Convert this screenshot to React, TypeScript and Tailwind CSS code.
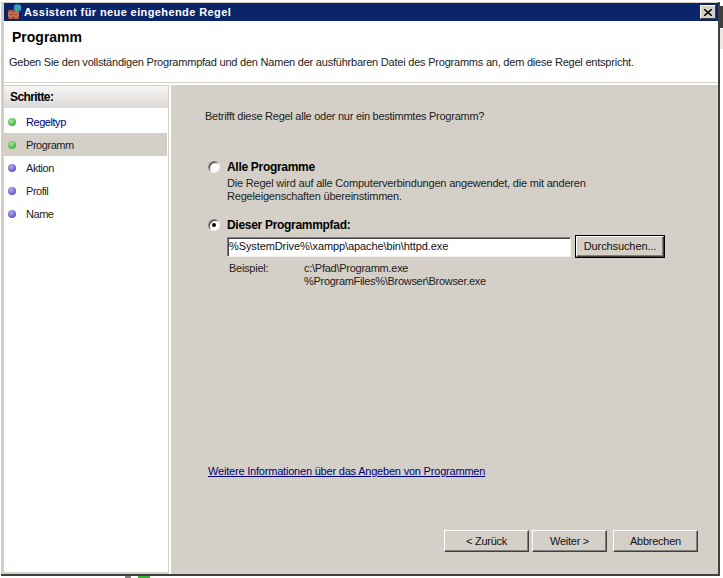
const font = { fontFamily: '"Liberation Sans", Arial, sans-serif' };

const raised = "bg-[#d4d0c8] border border-t-white border-l-white border-r-[#404040] border-b-[#404040] shadow-[inset_-1px_-1px_0_#808080]";

function Dot({ green }: { green?: boolean }) {
  return (
    <span
      className={
        "block w-[8px] h-[8px] rounded-full shrink-0 " +
        (green
          ? "bg-[radial-gradient(circle_at_40%_35%,#a8e8a0,#3fae3a_75%)]"
          : "bg-[radial-gradient(circle_at_40%_35%,#b4b0ee,#5a52c0_75%)]")
      }
    />
  );
}

function Step({ label, green, active, link }: { label: string; green?: boolean; active?: boolean; link?: boolean }) {
  return (
    <div className={"h-[23px] flex items-center pl-[4px] gap-[10px] w-[163px] " + (active ? "bg-[#d4d0c8]" : "")}>
      <Dot green={green} />
      <span className={"pt-[2px] text-[11px] tracking-[-0.45px] " + (link ? "text-[#000080]" : "text-[#1c1c1c]")}>{label}</span>
    </div>
  );
}

function Radio({ checked }: { checked?: boolean }) {
  return (
    <span className="w-[12px] h-[12px] rounded-full bg-white shrink-0 border border-t-[#808080] border-l-[#808080] border-r-[#f4f2ee] border-b-[#f4f2ee] shadow-[inset_1px_1px_0_#404040] flex items-center justify-center">
      {checked && <span className="w-[4px] h-[4px] rounded-full bg-black block" />}
    </span>
  );
}

function Btn({ label, w }: { label: string; w: string }) {
  return (
    <div className={raised + " h-[22px] flex items-center justify-center text-[11px] tracking-[-0.25px] text-[#111] " + w}>{label}</div>
  );
}

export default function App() {
  return (
    <div className="w-[723px] h-[578px] bg-white overflow-hidden flex" style={font}>
      <div className="w-[720px] shrink-0 flex flex-col pt-[2px]">
        <div className="ml-[1px] w-[719px] h-[574px] shrink-0 bg-[#d4d0c8] border-r-2 border-r-[#404040] border-b-2 border-b-[#404040] pl-[3px] pt-[1px] flex flex-col">
          {/* Title bar */}
          <div className="h-[18px] bg-[#0a246a] flex items-center pl-[3px] pr-[2px] shrink-0">
            <svg width="16" height="16" viewBox="0 0 16 16" className="shrink-0">
              <rect x="1" y="6" width="11" height="9" fill="#a5472f" />
              <path d="M1 9h11M1 12h11M4 6v3M9 6v3M2 9v3M7 9v3M11 9v3M4 12v3M9 12v3" stroke="#d9a58c" strokeWidth="0.7" />
              <circle cx="10.500" cy="4" r="3.800" fill="#2f8fe0" />
              <path d="M8 2c1.500-.8 3 .2 2.500 1.500S9 5 9.500 7M12 1.500c.8.800 1.500 1.500 1 2.800" stroke="#4fc050" strokeWidth="1.300" fill="none" />
            </svg>
            <span className="ml-[1px] text-white font-bold text-[11px] tracking-[0.4px] whitespace-nowrap">Assistent für neue eingehende Regel</span>
            <div className="ml-auto w-[16px] h-[14px] bg-[#d4d0c8] border border-t-white border-l-white border-r-[#404040] border-b-[#404040] flex items-center justify-center">
              <svg width="8" height="7" viewBox="0 0 8 7">
                <path d="M0 0l8 7M8 0l-8 7" stroke="#000" strokeWidth="1.400" />
              </svg>
            </div>
          </div>

          {/* Header */}
          <div className="h-[61px] bg-white shrink-0 pl-[5px] pt-[8px]">
            <div className="pl-[3px] text-[14px] font-bold text-black leading-[16px]">Programm</div>
            <div className="mt-[10px] text-[11px] text-[#1c1c1c] tracking-[-0.22px] leading-[15px] whitespace-nowrap">
              Geben Sie den vollständigen Programmpfad und den Namen der ausführbaren Datei des Programms an, dem diese Regel entspricht.
            </div>
          </div>
          <div className="h-[1px] bg-[#d4d0c8] shrink-0" />
          <div className="h-[2px] bg-white shrink-0" />

          {/* Main */}
          <div className="flex-1 flex min-h-0">
            <div className="w-[164px] bg-white shrink-0 border-t border-t-[#d4d0c8] border-b-2 border-b-[#d4d0c8] flex flex-col">
              <div className="h-[22px] bg-[linear-gradient(#f8f5f5,#dcd8d8)] flex items-center pl-[6px] text-[12px] font-bold tracking-[-0.6px] text-black">Schritte:</div>
              <div className="pt-[2px]">
                <Step label="Regeltyp" green link />
                <Step label="Programm" green active />
                <Step label="Aktion" />
                <Step label="Profil" />
                <Step label="Name" />
              </div>
            </div>

            <div className="w-[1px] shrink-0 bg-[#d4d0c8]" />
            <div className="w-[2px] shrink-0 bg-white" />

            <div className="flex-1 min-w-0 flex flex-col pl-[34px] pt-[24px] pb-[22px] text-[11px] text-[#1c1c1c] tracking-[-0.26px]">
              <div className="leading-[15px]">Betrifft diese Regel alle oder nur ein bestimmtes Programm?</div>

              <div className="mt-[35px] flex items-center gap-[7px] h-[15px] ml-[3px]">
                <Radio />
                <span className="font-bold text-[12px] tracking-[-0.3px] text-black">Alle Programme</span>
              </div>
              <div className="ml-[22px] mt-[3px] leading-[13px] w-[400px] tracking-[-0.2px]">
                Die Regel wird auf alle Computerverbindungen angewendet, die mit anderen Regeleigenschaften übereinstimmen.
              </div>

              <div className="mt-[14px] flex items-center gap-[7px] h-[15px] ml-[3px]">
                <Radio checked />
                <span className="font-bold text-[12px] tracking-[-0.3px] text-black">Dieser Programmpfad:</span>
              </div>
              <div className="ml-[22px] mt-[4px] flex items-center gap-[5px]">
                <div className="w-[344px] h-[20px] bg-white border border-t-[#808080] border-l-[#808080] border-r-[#f4f2ee] border-b-[#f4f2ee] shadow-[inset_1px_1px_0_#404040] flex items-center pl-[1px] text-[#111] tracking-[-0.1px]">
                  %SystemDrive%\xampp\apache\bin\httpd.exe
                </div>
                <div className={raised + " outline outline-1 outline-black w-[88px] h-[21px] flex items-center justify-center tracking-[-0.1px] text-[#111]"}>Durchsuchen...</div>
              </div>
              <div className="ml-[24px] mt-[5px] flex leading-[13px]">
                <div className="w-[75px]">Beispiel:</div>
                <div>
                  <div>c:\Pfad\Programm.exe</div>
                  <div className="tracking-[-0.3px]">%ProgramFiles%\Browser\Browser.exe</div>
                </div>
              </div>

              <div className="ml-[3px] mt-[176px] leading-[15px] text-[#000080] underline whitespace-nowrap tracking-[-0.2px]">
                Weitere Informationen über das Angeben von Programmen
              </div>

              <div className="mt-auto flex pl-[239px]">
                <Btn label="< Zurück" w="w-[85px]" />
                <Btn label="Weiter >" w="w-[75px] ml-[3px]" />
                <Btn label="Abbrechen" w="w-[85px] ml-[6px]" />
              </div>
            </div>
          </div>
        </div>
        {/* Fragments of the window behind, visible under the dialog */}
        <div className="flex h-[2px] pl-[125px]">
          <div className="w-[6px] h-[2px] bg-[#808080]" />
          <div className="ml-[7px] w-[12px] h-[2px] bg-[#3fae3a]" />
        </div>
      </div>
      {/* Strip of the desktop behind the dialog */}
      <div className="w-[3px] shrink-0 pt-[6px]">
        <div className="h-[22px] bg-[#404040]" />
        <div className="h-[1px] bg-white" />
        <div className="h-[20px] bg-[#ece9e4]" />
      </div>
    </div>
  );
}
